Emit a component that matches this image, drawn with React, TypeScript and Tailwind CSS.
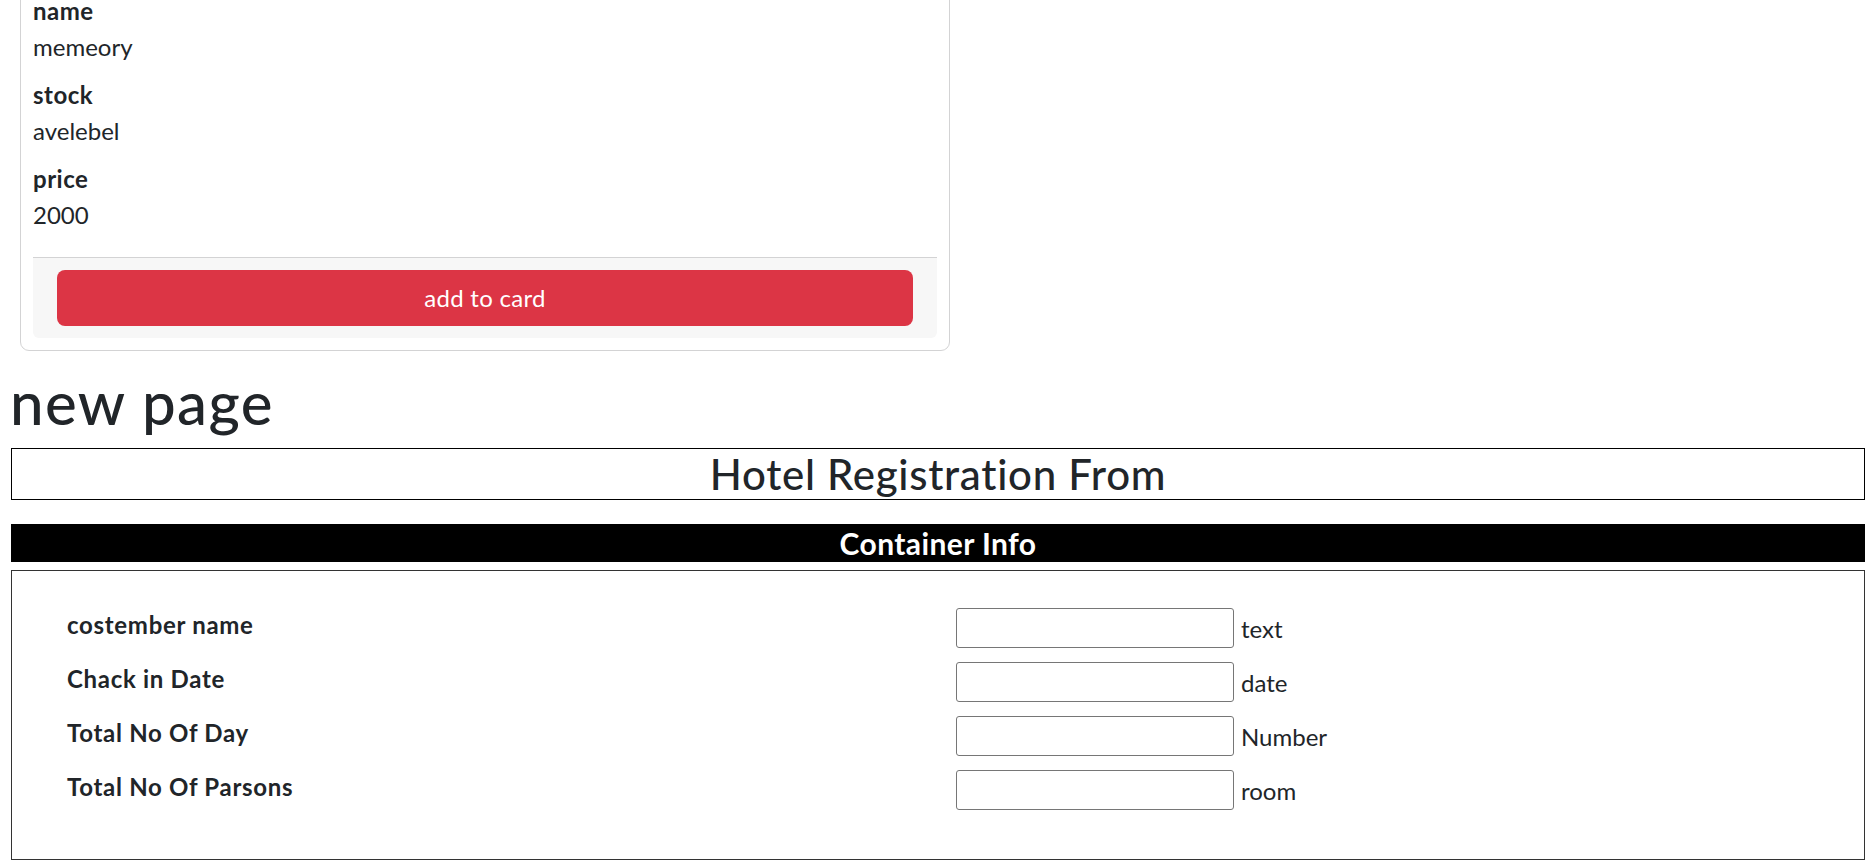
import React from 'react'

const font = { fontFamily: 'Lato, "Noto Sans", sans-serif' }

const fields = [
  { label: 'costember name', type: 'text' },
  { label: 'Chack in Date', type: 'date' },
  { label: 'Total No Of Day', type: 'Number' },
  { label: 'Total No Of Parsons', type: 'room' },
]

function ProductCard() {
  return (
    <div className="ml-[20px] w-[930px] rounded-[9px] border border-[#d3d3d4] bg-white p-[12px]">
      <div className="pb-[12px]">
        <div className="text-[24px] leading-[36px] font-bold tracking-[0.5px]">name</div>
        <div className="mb-[12px] text-[24px] leading-[36px]">memeory</div>
        <div className="text-[24px] leading-[36px] font-bold tracking-[0.5px]">stock</div>
        <div className="mb-[12px] text-[24px] leading-[36px]">avelebel</div>
        <div className="text-[24px] leading-[36px] font-bold tracking-[0.5px]">price</div>
        <div className="mb-[12px] text-[24px] leading-[36px]">2000</div>
      </div>
      <div className="rounded-b-[6px] border-t border-[#d3d3d4] bg-[#f7f7f7] px-[24px] py-[12px]">
        <button className="h-[56px] w-full rounded-[8px] bg-[#dc3545] text-[24px] tracking-[0.3px] text-white">
          add to card
        </button>
      </div>
    </div>
  )
}

function RegistrationForm() {
  return (
    <div className="px-[11px]">
      <h3 className="border border-black text-center text-[42px] leading-[50px] font-medium tracking-[0.7px]">
        Hotel Registration From
      </h3>
      <h5 className="mt-[24px] h-[38px] bg-black text-center text-[30px] leading-[38px] font-bold tracking-[0.4px] text-white">
        Container Info
      </h5>
      <div className="mt-[8px] border border-[#333] pt-[30px] pb-[42px] pl-[55px]">
        {fields.map((f) => (
          <div key={f.label} className="flex h-[54px] items-start">
            <div className="w-[889px] pt-[6px] text-[24px] leading-[36px] font-bold tracking-[0.7px]">
              {f.label}
            </div>
            <input className="mt-[7px] h-[40px] w-[278px] rounded-[3px] border border-[#767676] bg-white" />
            <span className="ml-[7px] pt-[10px] text-[24px] leading-[36px]">{f.type}</span>
          </div>
        ))}
      </div>
    </div>
  )
}

export default function App() {
  return (
    <div className="h-[861px] overflow-hidden bg-white text-[#212529]" style={font}>
      <div className="-mt-[20px]">
        <ProductCard />
        <h1 className="mt-[15px] mb-[10px] px-[10px] text-[60px] leading-[72px] font-medium tracking-[1.4px]">
          new page
        </h1>
        <RegistrationForm />
      </div>
    </div>
  )
}
